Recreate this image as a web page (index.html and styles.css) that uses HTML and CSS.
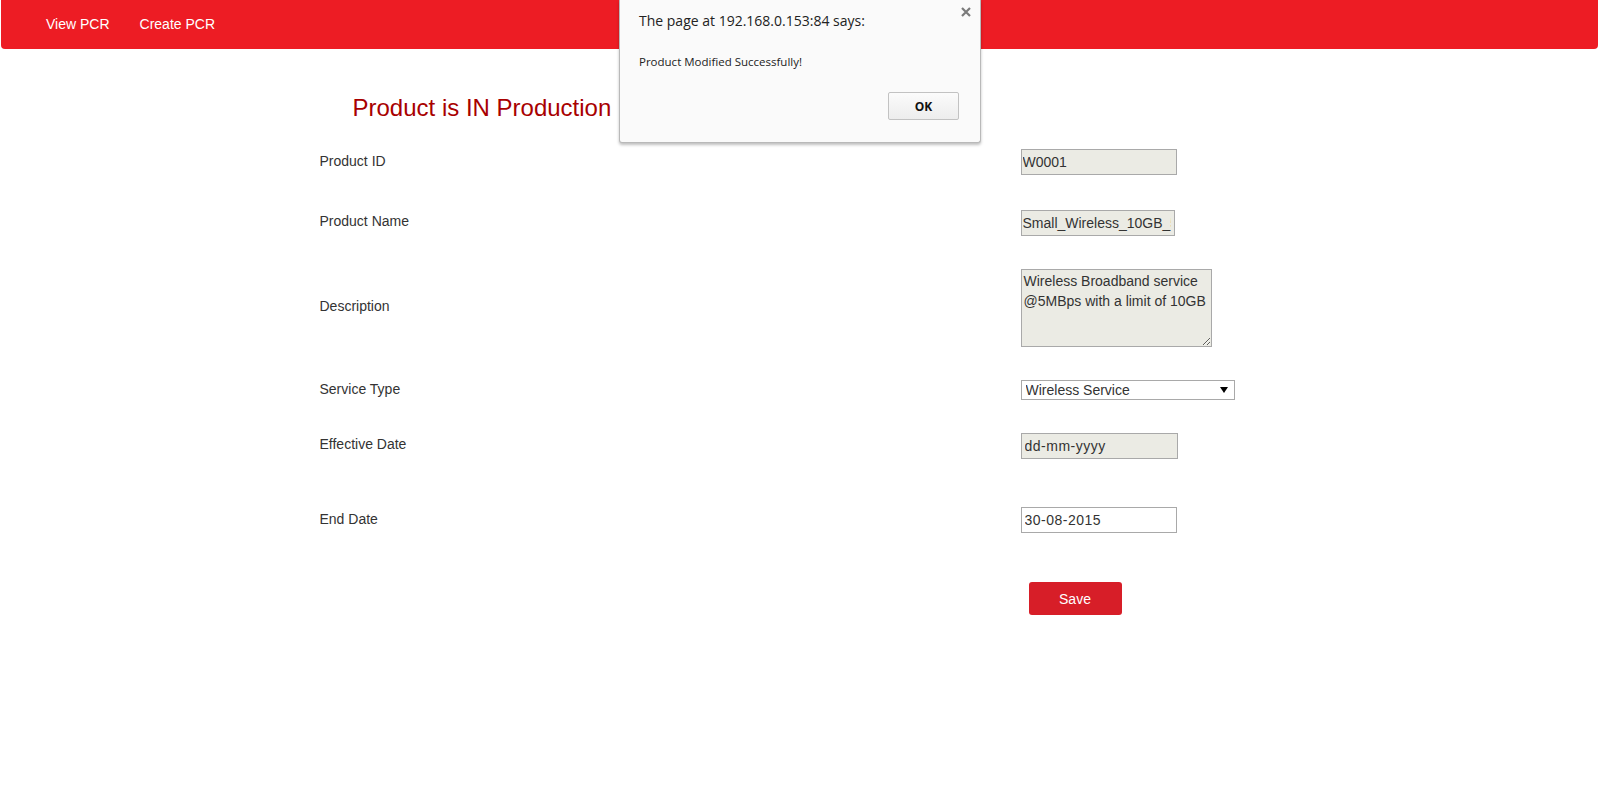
FILE: index.html
```html
<!DOCTYPE html>
<html lang="en">
<head>
<meta charset="utf-8">
<title>PCR - Edit Product</title>
<link rel="stylesheet" href="styles.css">
</head>
<body>
<nav class="navbar">
  <ul class="nav-links">
    <li><a href="#" class="nav-link">View PCR</a></li>
    <li><a href="#" class="nav-link">Create PCR</a></li>
  </ul>
</nav>

<main class="container">
  <h2 class="status-title">Product is IN Production</h2>
  <form class="pcr-form">
    <div class="form-row row-id">
      <label class="field-label">Product ID</label>
      <div class="field"><input class="input readonly w-156" type="text" value="W0001" readonly></div>
    </div>
    <div class="form-row row-name">
      <label class="field-label">Product Name</label>
      <div class="field"><input class="input readonly w-154 name-input" type="text" value="Small_Wireless_10GB_5MBps" readonly></div>
    </div>
    <div class="form-row row-desc">
      <label class="field-label">Description</label>
      <div class="field"><textarea class="textarea readonly" readonly>Wireless Broadband service @5MBps with a limit of 10GB</textarea></div>
    </div>
    <div class="form-row row-type">
      <label class="field-label">Service Type</label>
      <div class="field">
        <div class="select-wrap">
          <select class="select">
            <option>Wireless Service</option>
          </select>
          <span class="select-arrow"></span>
        </div>
      </div>
    </div>
    <div class="form-row row-eff">
      <label class="field-label">Effective Date</label>
      <div class="field"><input class="input readonly date w-157" type="text" value="dd-mm-yyyy" readonly></div>
    </div>
    <div class="form-row row-end">
      <label class="field-label">End Date</label>
      <div class="field"><input class="input date w-156" type="text" value="30-08-2015"></div>
    </div>
    <div class="form-row row-save">
      <span class="field-label"></span>
      <div class="field"><button type="button" class="btn-save">Save</button></div>
    </div>
  </form>
</main>

<div class="dialog" role="alertdialog">
  <button type="button" class="dialog-close" aria-label="Close">
    <svg width="10" height="10" viewBox="0 0 10 10"><path d="M1 1 L9 9 M9 1 L1 9" stroke="#7a7a7a" stroke-width="2.2" fill="none"/></svg>
  </button>
  <div class="dialog-title">The page at 192.168.0.153:84 says:</div>
  <div class="dialog-message">Product Modified Successfully!</div>
  <div class="dialog-actions">
    <button type="button" class="dialog-ok">OK</button>
  </div>
</div>
</body>
</html>
```

FILE: styles.css
```css
* {
  box-sizing: border-box;
}

html, body {
  margin: 0;
  padding: 0;
  background: #ffffff;
}

body {
  font-family: "Liberation Sans", Arial, sans-serif;
  font-size: 14px;
  color: #333333;
  position: relative;
  min-height: 797px;
}

/* Navbar */
.navbar {
  margin: 0 1px;
  height: 49px;
  background: #ed1c24;
  border-radius: 0 0 4px 4px;
  padding: 0 0 0 30px;
}

.nav-links {
  list-style: none;
  margin: 0;
  padding: 0;
  display: flex;
}

.nav-link {
  display: block;
  padding: 0 15px;
  line-height: 49px;
  color: #ffffff;
  text-decoration: none;
  font-size: 14px;
}

/* Content */
.container {
  width: 960px;
  margin: 0 auto;
}

.status-title {
  margin: 47px 0 0 33px;
  font-size: 24px;
  line-height: 24px;
  font-weight: normal;
  color: #a80000;
}

.pcr-form {
  display: flex;
  flex-direction: column;
}

.form-row {
  display: grid;
  grid-template-columns: 701px 1fr;
  align-items: center;
}

.row-id { margin-top: 29px; }
.row-name { margin-top: 35px; }
.row-desc { margin-top: 33px; }
.row-type { margin-top: 33px; }
.row-eff { margin-top: 33px; }
.row-end { margin-top: 48px; }
.row-save { margin-top: 49px; }

.field-label {
  font-size: 14px;
  line-height: 16px;
  color: #333333;
  padding-bottom: 5px;
}

.row-id .field-label,
.row-end .field-label {
  padding-bottom: 3px;
}

.row-type .field-label {
  padding-bottom: 2px;
}

.field {
  display: flex;
}

.input {
  height: 26px;
  border: 1px solid #a9a9a9;
  background: #ffffff;
  font-family: "Liberation Sans", Arial, sans-serif;
  font-size: 14px;
  color: #333333;
  padding: 0 1px;
  margin: 0;
  outline: none;
}

.input.readonly,
.textarea.readonly {
  background: #ebebe4;
}

.name-input {
  padding: 0 3px 0 1px;
}

.w-154 { width: 154px; }
.w-156 { width: 156px; }
.w-157 { width: 157px; }

.input.date {
  padding-left: 3px;
  letter-spacing: 0.5px;
}

.textarea {
  width: 191px;
  height: 78px;
  border: 1px solid #a9a9a9;
  font-family: "Liberation Sans", Arial, sans-serif;
  font-size: 14px;
  line-height: 20px;
  color: #333333;
  padding: 1px 2px;
  margin: 0;
  resize: both;
  overflow: hidden;
  outline: none;
}

.select-wrap {
  position: relative;
  width: 214px;
  height: 20px;
}

.select {
  -webkit-appearance: none;
  appearance: none;
  width: 214px;
  height: 20px;
  border: 1px solid #a9a9a9;
  border-radius: 0;
  background: #ffffff;
  font-family: "Liberation Sans", Arial, sans-serif;
  font-size: 14px;
  color: #333333;
  padding: 0 0 0 4px;
  margin: 0;
  outline: none;
}

.select-arrow {
  position: absolute;
  right: 7px;
  top: 7px;
  width: 0;
  height: 0;
  border-left: 4px solid transparent;
  border-right: 4px solid transparent;
  border-top: 6px solid #000000;
  pointer-events: none;
}

.btn-save {
  margin-left: 8px;
  width: 93px;
  height: 33px;
  border: none;
  border-radius: 3px;
  background: #d71e28;
  color: #ffffff;
  font-family: "Liberation Sans", Arial, sans-serif;
  font-size: 14px;
  cursor: pointer;
}

/* Alert dialog */
.dialog {
  position: absolute;
  left: 619px;
  top: 0;
  width: 362px;
  height: 143px;
  background: #fafafa;
  border: 1px solid #b9b9b9;
  border-top: none;
  border-radius: 0 0 3px 3px;
  box-shadow: 0 2px 3px rgba(0, 0, 0, 0.25);
  padding: 0 0 0 19px;
  font-family: "Open Sans", "Noto Sans", sans-serif;
  color: #222222;
}

.dialog-close {
  position: absolute;
  right: 9px;
  top: 7px;
  width: 10px;
  height: 10px;
  padding: 0;
  border: none;
  background: transparent;
  display: flex;
}

.dialog-title {
  margin-top: 11px;
  font-size: 14px;
  line-height: 20px;
  color: #222222;
}

.dialog-message {
  margin-top: 23px;
  font-size: 11.5px;
  line-height: 16px;
  color: #222222;
}

.dialog-actions {
  display: flex;
  justify-content: flex-end;
  padding-right: 21px;
  margin-top: 22px;
}

.dialog-ok {
  width: 71px;
  height: 28px;
  border: 1px solid #c2c2c2;
  border-radius: 2px;
  background: linear-gradient(#fbfbfb, #ededed);
  font-family: "Open Sans", "Noto Sans", sans-serif;
  font-size: 12px;
  font-weight: bold;
  color: #111111;
  padding: 0;
}
```
